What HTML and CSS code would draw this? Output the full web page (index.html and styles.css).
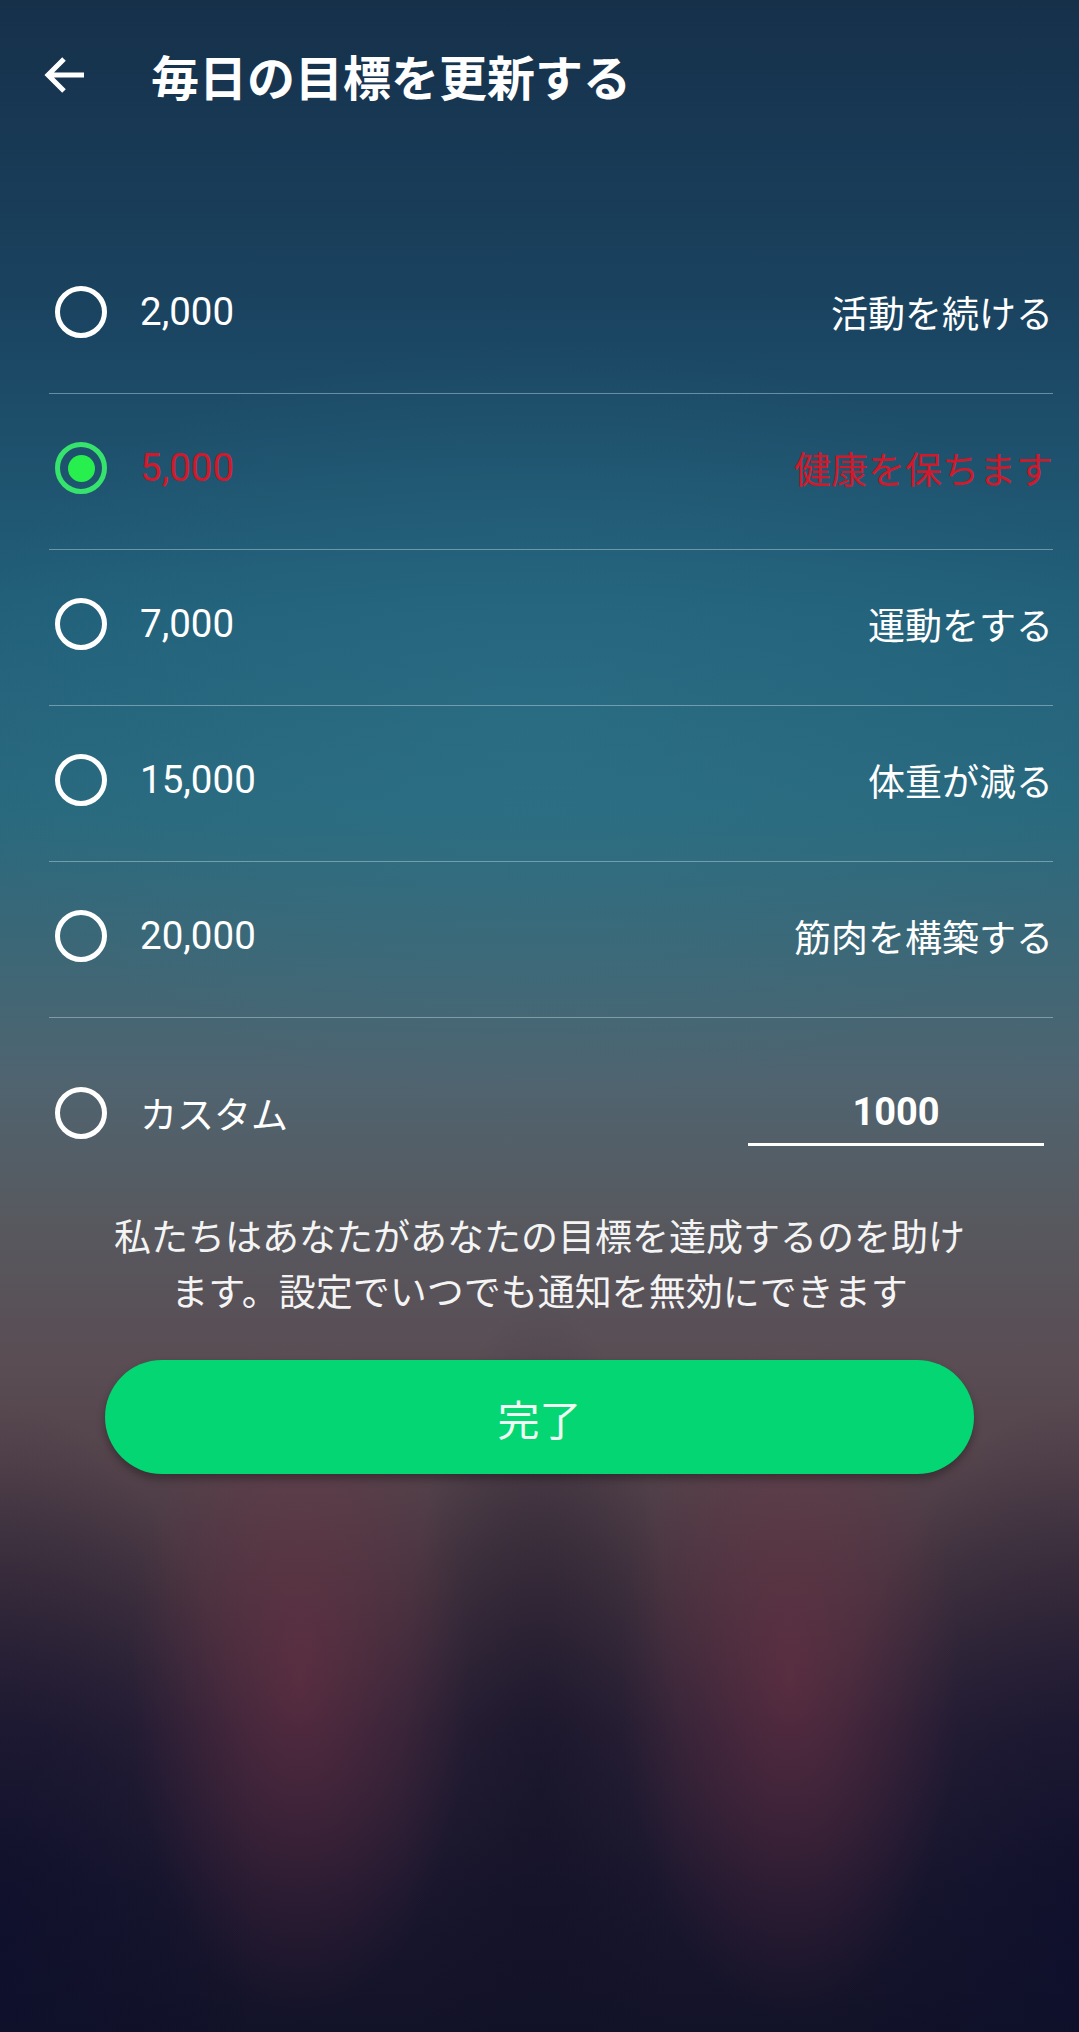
FILE: index.html
```html
<!DOCTYPE html>
<html lang="ja">
<head>
<meta charset="utf-8">
<title>毎日の目標を更新する</title>
<link rel="stylesheet" href="styles.css">
</head>
<body>
<div class="screen">
  <header class="topbar">
    <svg class="back" viewBox="0 0 42 38" width="42" height="38" aria-hidden="true">
      <path d="M41 19 H5 M21 3 L5 19 L21 35" fill="none" stroke="#fff" stroke-width="5"/>
    </svg>
    <h1 class="title">毎日の目標を更新する</h1>
  </header>

  <ul class="goals">
    <li class="goal">
      <span class="radio"></span>
      <span class="num">2,000</span>
      <span class="label">活動を続ける</span>
    </li>
    <li class="goal is-selected">
      <span class="radio"></span>
      <span class="num">5,000</span>
      <span class="label">健康を保ちます</span>
    </li>
    <li class="goal">
      <span class="radio"></span>
      <span class="num">7,000</span>
      <span class="label">運動をする</span>
    </li>
    <li class="goal">
      <span class="radio"></span>
      <span class="num">15,000</span>
      <span class="label">体重が減る</span>
    </li>
    <li class="goal">
      <span class="radio"></span>
      <span class="num">20,000</span>
      <span class="label">筋肉を構築する</span>
    </li>
    <li class="goal goal-custom">
      <span class="radio"></span>
      <span class="num">カスタム</span>
      <input class="custom-input" type="text" value="1000">
    </li>
  </ul>

  <p class="note">私たちはあなたがあなたの目標を達成するのを助けます。設定でいつでも通知を無効にできます</p>

  <button class="done" type="button">完了</button>
</div>
</body>
</html>
```

FILE: styles.css
```css
html, body {
  margin: 0;
  padding: 0;
}

body {
  font-family: Roboto, "Noto Sans CJK JP", sans-serif;
  color: #fff;
  background: #111229;
}

.screen {
  width: 1079px;
  min-height: 2032px;
  box-sizing: border-box;
  display: flex;
  flex-direction: column;
  background:
    radial-gradient(ellipse 170px 340px at 300px 1680px, rgba(125, 52, 72, 0.5), rgba(125, 52, 72, 0) 100%),
    radial-gradient(ellipse 170px 340px at 790px 1680px, rgba(125, 52, 72, 0.5), rgba(125, 52, 72, 0) 100%),
    radial-gradient(ellipse 140px 480px at 540px 1780px, rgba(14, 14, 36, 0.5), rgba(14, 14, 36, 0) 100%),
    radial-gradient(ellipse 260px 520px at 0px 1920px, rgba(12, 14, 44, 0.7), rgba(12, 14, 44, 0) 100%),
    radial-gradient(ellipse 260px 520px at 1079px 1920px, rgba(12, 14, 44, 0.7), rgba(12, 14, 44, 0) 100%),
    radial-gradient(ellipse 600px 380px at 540px 720px, rgba(52, 125, 145, 0.3), rgba(52, 125, 145, 0) 100%),
    linear-gradient(180deg,
      #16304a 0%,
      #1a4360 15%,
      #22607a 30%,
      #29697e 40%,
      #3d6776 47%,
      #4f6470 53%,
      #57595f 60%,
      #5a4d54 67%,
      #54434b 72%,
      #43333f 78%,
      #2b2136 85%,
      #1a172e 93%,
      #121228 100%);
}

/* Header */
.topbar {
  height: 150px;
  display: flex;
  align-items: center;
  padding-left: 43px;
}

.back {
  display: block;
  flex: none;
}

.title {
  margin: 0 0 0 66px;
  font-family: "Noto Sans CJK JP", sans-serif;
  font-size: 48px;
  font-weight: 700;
  line-height: 1;
  letter-spacing: 0;
}

/* Goal list */
.goals {
  list-style: none;
  margin: 88px 26px 0 49px;
  padding: 0;
}

.goal {
  height: 148px;
  padding-bottom: 7px;
  display: flex;
  align-items: center;
  border-bottom: 1px solid rgba(200, 220, 232, 0.45);
  padding-left: 6px;
}

.radio {
  flex: none;
  width: 52px;
  height: 52px;
  box-sizing: border-box;
  border: 5px solid #fff;
  border-radius: 50%;
  display: flex;
  align-items: center;
  justify-content: center;
}

.num {
  margin-left: 33px;
  font-size: 38.5px;
  line-height: 1;
}

.label {
  margin-left: auto;
  font-family: "Noto Sans CJK JP", sans-serif;
  font-size: 37px;
  line-height: 1;
}

.goal.is-selected .radio {
  border-color: #36e36c;
}

.goal.is-selected .radio::after {
  content: "";
  width: 27px;
  height: 27px;
  border-radius: 50%;
  background: #27f04e;
}

.goal.is-selected .num,
.goal.is-selected .label {
  color: #d0192a;
}

.goal-custom {
  height: 190px;
  padding-bottom: 0;
  border-bottom: none;
}

.goal-custom .num {
  font-family: "Noto Sans CJK JP", sans-serif;
  font-size: 37px;
}

.custom-input {
  margin-left: auto;
  margin-right: 9px;
  margin-top: 1px;
  width: 296px;
  height: 64px;
  box-sizing: border-box;
  padding: 0;
  background: transparent;
  border: none;
  border-bottom: 3px solid #fff;
  color: #fff;
  font-family: Roboto, sans-serif;
  font-size: 38px;
  font-weight: 700;
  text-align: center;
  outline: none;
}

/* Note */
.note {
  width: 870px;
  margin: 0 auto;
  font-family: "Noto Sans CJK JP", sans-serif;
  font-size: 37px;
  line-height: 55px;
  text-align: center;
  color: #f4f4f4;
}

/* Done button */
.done {
  align-self: center;
  margin-top: 42px;
  width: 869px;
  height: 114px;
  border: none;
  border-radius: 57px;
  background: #03d672;
  color: #eefcf2;
  font-family: "Noto Sans CJK JP", sans-serif;
  font-size: 42px;
  box-shadow: 0 5px 8px rgba(0, 0, 0, 0.3);
  cursor: pointer;
}
```
